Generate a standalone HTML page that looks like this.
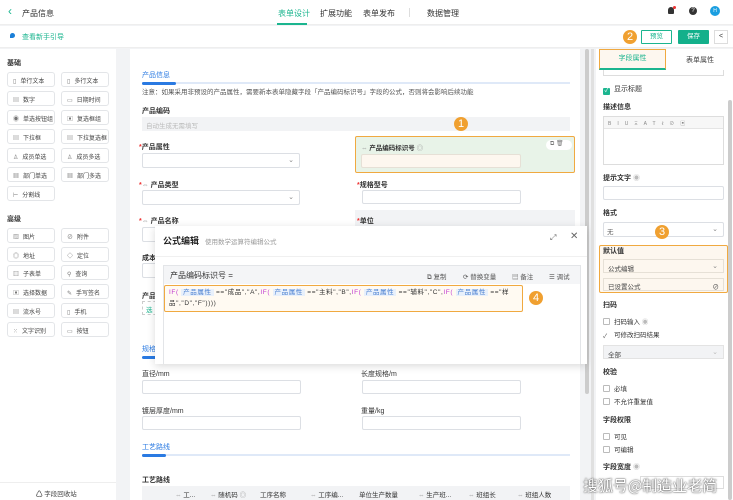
<!DOCTYPE html>
<html><head><meta charset="utf-8"><style>
*{margin:0;padding:0;box-sizing:border-box}
body{width:733px;height:500px;overflow:hidden;background:#f2f3f5;font-family:"Liberation Sans","Noto Sans CJK SC",sans-serif;font-size:7px;color:#333;position:relative}
.a{position:absolute;white-space:nowrap}
.b{font-weight:bold}
.btn{position:absolute;width:48px;height:15px;border:1px solid #e3e5e8;border-radius:3px;background:#fff;font-size:6px;color:#444;padding:3px 0 0 5px;white-space:nowrap}
.btn i{font-style:normal;color:#777;margin-right:4px}
.inp{position:absolute;border:1px solid #dcdfe4;border-radius:2px;background:#fff}
.lab{position:absolute;font-size:7px;font-weight:bold;color:#333;white-space:nowrap}
.req:before{content:"*";color:#e33}
.chev{position:absolute;right:5px;top:2px;color:#888;font-size:7px}
.circ{position:absolute;width:14px;height:14px;border-radius:50%;background:#f0a030;color:#fff;font-size:11px;text-align:center;line-height:14px}
.tag{background:#e8f0fb;color:#4a7fd0;padding:0 2px}
.kw{color:#c03ad0}
.cb{display:inline-block;width:7px;height:7px;border:1px solid #bbb;border-radius:1px;vertical-align:-1px;margin-right:4px;background:#fff}
</style></head><body>
<div class="a" style="left:0;top:0;width:733px;height:25px;background:#fff;border-bottom:1px solid #eee"></div>
<div class="a" style="left:8px;top:4px;font-size:12px;color:#1bb58f">&#8249;</div>
<div class="a" style="left:22px;top:8px;font-size:8px;color:#333">产品信息</div>
<div class="a" style="left:278px;top:8px;font-size:8px;color:#1bb58f">表单设计</div>
<div class="a" style="left:277px;top:23px;width:30px;height:2px;background:#1bb58f"></div>
<div class="a" style="left:320px;top:8px;font-size:8px">扩展功能</div>
<div class="a" style="left:363px;top:8px;font-size:8px">表单发布</div>
<div class="a" style="left:409px;top:8px;width:1px;height:9px;background:#ddd"></div>
<div class="a" style="left:427px;top:8px;font-size:8px">数据管理</div>
<div class="a" style="left:668px;top:7px;width:6px;height:7px;background:#333;border-radius:3px 3px 1px 1px"></div>
<div class="a" style="left:673px;top:6px;width:3px;height:3px;background:#e33;border-radius:50%"></div>
<div class="a" style="left:689px;top:7px;width:8px;height:8px;background:#333;border-radius:50%;color:#fff;font-size:6px;text-align:center;line-height:8px">?</div>
<div class="a" style="left:710px;top:6px;width:10px;height:10px;background:#1a9ee0;border-radius:50%;color:#fff;font-size:5px;text-align:center;line-height:10px">H</div>
<div class="a" style="left:0;top:26px;width:733px;height:22px;background:#fff;border-bottom:1px solid #eee"></div>
<div class="a" style="left:10px;top:33px;width:5px;height:5px;background:#1a7fd8;border-radius:50% 50% 50% 0"></div>
<div class="a" style="left:22px;top:32px;font-size:7px;color:#1bb58f">查看新手引导</div>
<div class="a" style="left:641px;top:30px;width:31px;height:14px;border:1px solid #1bb58f;color:#1bb58f;font-size:6.5px;text-align:center;line-height:12px;border-radius:1px">预览</div>
<div class="a" style="left:678px;top:30px;width:31px;height:14px;background:#13b08b;color:#fff;font-size:6.5px;text-align:center;line-height:14px;border-radius:1px">保存</div>
<div class="a" style="left:714px;top:30px;width:14px;height:14px;border:1px solid #ddd;background:#fff;font-size:7px;text-align:center;line-height:12px">&lt;</div>
<div class="circ" style="left:623px;top:30px">2</div>
<div class="a" style="left:0;top:49px;width:116px;height:451px;background:#fff"></div>
<div class="a b" style="left:7px;top:58px;font-size:7px">基础</div>
<div class="btn" style="left:7px;top:72px"><i>▯</i>单行文本</div><div class="btn" style="left:61px;top:72px"><i>▯</i>多行文本</div>
<div class="btn" style="left:7px;top:91px"><i>▤</i>数字</div><div class="btn" style="left:61px;top:91px"><i>▭</i>日期时间</div>
<div class="btn" style="left:7px;top:110px"><i>◉</i>单选按钮组</div><div class="btn" style="left:61px;top:110px"><i>▣</i>复选框组</div>
<div class="btn" style="left:7px;top:129px"><i>▤</i>下拉框</div><div class="btn" style="left:61px;top:129px"><i>▤</i>下拉复选框</div>
<div class="btn" style="left:7px;top:148px"><i>♙</i>成员单选</div><div class="btn" style="left:61px;top:148px"><i>♙</i>成员多选</div>
<div class="btn" style="left:7px;top:167px"><i>▦</i>部门单选</div><div class="btn" style="left:61px;top:167px"><i>▦</i>部门多选</div>
<div class="btn" style="left:7px;top:186px"><i>⊢</i>分割线</div>
<div class="a b" style="left:7px;top:214px;font-size:7px">高级</div>
<div class="btn" style="left:7px;top:228px"><i>▨</i>图片</div><div class="btn" style="left:61px;top:228px"><i>⊘</i>附件</div>
<div class="btn" style="left:7px;top:247px"><i>◎</i>地址</div><div class="btn" style="left:61px;top:247px"><i>◇</i>定位</div>
<div class="btn" style="left:7px;top:265px"><i>▥</i>子表单</div><div class="btn" style="left:61px;top:265px"><i>⚲</i>查询</div>
<div class="btn" style="left:7px;top:284px"><i>▣</i>选择数据</div><div class="btn" style="left:61px;top:284px"><i>✎</i>手写签名</div>
<div class="btn" style="left:7px;top:303px"><i>▤</i>流水号</div><div class="btn" style="left:61px;top:303px"><i>▯</i>手机</div>
<div class="btn" style="left:7px;top:322px"><i>⁙</i>文字识别</div><div class="btn" style="left:61px;top:322px"><i>▭</i>按钮</div>
<div class="a" style="left:0;top:482px;width:116px;height:1px;background:#eee"></div>
<div class="a" style="left:36px;top:488px;font-size:6.5px;color:#444">♺ 字段回收站</div>
<div class="a" style="left:130px;top:49px;width:450px;height:451px;background:#fff"></div>
<div class="a" style="left:585px;top:49px;width:4px;height:345px;background:#ccc;border-radius:2px"></div>
<div class="a" style="left:142px;top:70px;font-size:7px;color:#2a7ae2">产品信息</div>
<div class="a" style="left:142px;top:82px;width:428px;height:2px;background:#dfe9f8"></div>
<div class="a" style="left:142px;top:82px;width:34px;height:3px;background:#2a7ae2;border-radius:2px"></div>
<div class="a" style="left:142px;top:86px;font-size:6.5px;color:#555">注意：如果采用非预设的产品属性，需要新本表单隐藏字段「产品编码标识号」字段的公式，否则将会影响后续功能</div>
<div class="lab" style="left:142px;top:106px">产品编码</div>
<div class="a" style="left:142px;top:117px;width:428px;height:14px;background:#f2f3f5"></div>
<div class="a" style="left:146px;top:120px;font-size:6.5px;color:#bbb">自动生成无需填写</div>
<div class="circ" style="left:454px;top:117px">1</div>
<div class="lab req" style="left:139px;top:142px">产品属性</div>
<div class="inp" style="left:142px;top:153px;width:158px;height:15px"><span class="chev">⌄</span></div>
<div class="a" style="left:355px;top:136px;width:220px;height:37px;background:#e8f3e8;border:1.5px solid #f0a940;border-radius:2px"></div>
<div class="a" style="left:361px;top:142px;font-size:6.5px;font-weight:bold"><span style="color:#999;font-weight:normal">⇔</span> 产品编码标识号 <span style="color:#999;font-weight:normal">◎</span></div>
<div class="a" style="left:546px;top:140px;width:26px;height:10px;background:#fff;border-radius:5px;font-size:6px;color:#777;padding-left:4px">⧉ 🗑</div>
<div class="a" style="left:361px;top:154px;width:160px;height:14px;background:#fdf7ef;border:1px solid #e6e0d6;border-radius:2px"></div>
<div class="lab req" style="left:139px;top:180px"><span style="color:#999;font-weight:normal">⇔</span> 产品类型</div>
<div class="inp" style="left:142px;top:190px;width:158px;height:15px"><span class="chev">⌄</span></div>
<div class="lab req" style="left:357px;top:180px">规格型号</div>
<div class="inp" style="left:362px;top:190px;width:159px;height:14px"></div>
<div class="lab req" style="left:139px;top:216px"><span style="color:#999;font-weight:normal">⇔</span> 产品名称</div>
<div class="a" style="left:355px;top:210px;width:220px;height:18px;background:#f2f3f5"></div>
<div class="lab req" style="left:357px;top:216px">单位</div>
<div class="inp" style="left:142px;top:227px;width:20px;height:15px"></div>
<div class="lab" style="left:142px;top:253px">成本</div>
<div class="inp" style="left:142px;top:263px;width:20px;height:15px"></div>
<div class="lab" style="left:142px;top:291px">产品</div>
<div class="a" style="left:142px;top:301px;width:20px;height:14px;border:1px dashed #ccc;font-size:6.5px;color:#1bb58f;padding:2px 3px">选</div>
<div class="a" style="left:142px;top:344px;font-size:7px;color:#2a7ae2">规格</div>
<div class="a" style="left:142px;top:356px;width:20px;height:3px;background:#2a7ae2;border-radius:2px"></div>
<div class="lab" style="left:142px;top:369px;font-weight:normal;color:#333">直径/mm</div>
<div class="inp" style="left:142px;top:380px;width:159px;height:14px"></div>
<div class="lab" style="left:361px;top:369px;font-weight:normal">长度规格/m</div>
<div class="inp" style="left:362px;top:380px;width:159px;height:14px"></div>
<div class="lab" style="left:142px;top:406px;font-weight:normal">镀层厚度/mm</div>
<div class="inp" style="left:142px;top:416px;width:159px;height:14px"></div>
<div class="lab" style="left:361px;top:406px;font-weight:normal">重量/kg</div>
<div class="inp" style="left:362px;top:416px;width:159px;height:14px"></div>
<div class="a" style="left:142px;top:442px;font-size:7px;color:#2a7ae2">工艺路线</div>
<div class="a" style="left:142px;top:454px;width:428px;height:2px;background:#dfe9f8"></div>
<div class="a" style="left:142px;top:454px;width:24px;height:3px;background:#2a7ae2;border-radius:2px"></div>
<div class="lab" style="left:142px;top:475px">工艺路线</div>
<div class="a" style="left:142px;top:486px;width:428px;height:14px;background:#f2f3f5"></div>
<div class="a" style="left:175px;top:489px;font-size:6.5px;color:#333"><span style="color:#999">⇔</span> 工...</div>
<div class="a" style="left:210px;top:489px;font-size:6.5px"><span style="color:#999">⇔</span> 随机码 <span style="color:#999">◎</span></div>
<div class="a" style="left:260px;top:489px;font-size:6.5px">工序名称</div>
<div class="a" style="left:310px;top:489px;font-size:6.5px"><span style="color:#999">⇔</span> 工序编...</div>
<div class="a" style="left:359px;top:489px;font-size:6.5px">单位生产数量</div>
<div class="a" style="left:418px;top:489px;font-size:6.5px"><span style="color:#999">⇔</span> 生产班...</div>
<div class="a" style="left:468px;top:489px;font-size:6.5px"><span style="color:#999">⇔</span> 班组长</div>
<div class="a" style="left:517px;top:489px;font-size:6.5px"><span style="color:#999">⇔</span> 班组人数</div>
<div class="a" style="left:155px;top:226px;width:432px;height:138px;background:#fff;box-shadow:0 2px 8px rgba(0,0,0,.15)"></div>
<div class="a" style="left:155px;top:256px;width:432px;height:1px;background:#f0f0f0"></div>
<div class="a b" style="left:163px;top:234px;font-size:9px;color:#222">公式编辑</div>
<div class="a" style="left:205px;top:236px;font-size:6.5px;color:#999">使用数学运算符编辑公式</div>
<div class="a" style="left:550px;top:233px;font-size:8px;color:#666">⤢</div>
<div class="a" style="left:570px;top:231px;font-size:10px;color:#666">✕</div>
<div class="a" style="left:163px;top:265px;width:418px;height:99px;border:1px solid #e3e5e8;border-bottom:none"></div>
<div class="a" style="left:164px;top:266px;width:416px;height:18px;background:#f4f5f7"></div>
<div class="a" style="left:170px;top:270px;font-size:8px;color:#333">产品编码标识号 =</div>
<div class="a" style="left:427px;top:271px;font-size:6.5px;color:#555">⧉ 复制</div>
<div class="a" style="left:463px;top:271px;font-size:6.5px;color:#555">⟳ 替换变量</div>
<div class="a" style="left:512px;top:271px;font-size:6.5px;color:#555">▤ 备注</div>
<div class="a" style="left:549px;top:271px;font-size:6.5px;color:#555">☰ 调试</div>
<div class="a" style="left:164px;top:285px;width:359px;height:27px;background:#fffaf2;border:1.5px solid #f0a940;border-radius:2px"></div>
<div class="a" style="left:169px;top:288px;font-size:6.5px;line-height:10.5px;color:#333;font-family:'Liberation Sans','Noto Sans CJK SC',sans-serif;letter-spacing:0.6px"><span class="kw">IF(</span> <span class="tag">产品属性</span> =="成品","A",<span class="kw">IF(</span> <span class="tag">产品属性</span> =="主料","B",<span class="kw">IF(</span> <span class="tag">产品属性</span> =="辅料","C",<span class="kw">IF(</span> <span class="tag">产品属性</span> =="样<br>品","D","F"))))</div>
<div class="circ" style="left:529px;top:291px">4</div>
<div class="a" style="left:596px;top:49px;width:137px;height:451px;background:#fff"></div>
<div class="a" style="left:591px;top:49px;width:3px;height:451px;background:#e0e0e0"></div>
<div class="a" style="left:728px;top:100px;width:4px;height:400px;background:#ccc;border-radius:2px"></div>
<div class="a" style="left:599px;top:49px;width:67px;height:21px;background:#fdf7ef;border:1.5px solid #f0a940;border-bottom:2px solid #1bb58f;font-size:7px;color:#1bb58f;text-align:center;line-height:18px">字段属性</div>
<div class="a" style="left:686px;top:55px;font-size:7px;color:#444">表单属性</div>
<div class="a" style="left:603px;top:70px;width:121px;height:6px;border:1px solid #ddd;border-top:none"></div>
<div class="a" style="left:603px;top:84px;font-size:7px"><span class="cb" style="background:#1bb58f;border-color:#1bb58f;color:#fff;font-size:6px;line-height:5px;text-align:center">✓</span>显示标题</div>
<div class="lab" style="left:603px;top:102px">描述信息</div>
<div class="a" style="left:603px;top:116px;width:121px;height:49px;border:1px solid #ddd"></div>
<div class="a" style="left:604px;top:117px;width:119px;height:12px;background:#f7f7f7;border-bottom:1px solid #e5e5e5;font-size:5px;color:#888;padding:3px 4px;letter-spacing:6px">BIUΞATℓ⊘▣</div>
<div class="lab" style="left:603px;top:173px">提示文字 <span style="color:#bbb;font-weight:normal">◉</span></div>
<div class="inp" style="left:603px;top:186px;width:121px;height:14px"></div>
<div class="lab" style="left:603px;top:208px">格式</div>
<div class="inp" style="left:603px;top:222px;width:121px;height:15px"><span class="a" style="left:3px;top:3px;font-size:6.5px;color:#666">无</span><span class="chev">⌄</span></div>
<div class="circ" style="left:655px;top:225px">3</div>
<div class="a" style="left:599px;top:245px;width:129px;height:48px;background:#fdf7ef;border:1.5px solid #f0a940;border-radius:2px"></div>
<div class="lab" style="left:603px;top:246px">默认值</div>
<div class="a" style="left:603px;top:259px;width:121px;height:14px;border:1px solid #e6e0d6;font-size:6.5px;color:#444;padding:3px 0 0 4px">公式编辑<span class="chev">⌄</span></div>
<div class="a" style="left:603px;top:278px;width:121px;height:13px;border:1px solid #e6e0d6;font-size:6.5px;color:#444;padding:2px 0 0 4px">已设置公式<span class="a" style="right:4px;top:2px">⊘</span></div>
<div class="lab" style="left:603px;top:300px">扫码</div>
<div class="a" style="left:603px;top:316px;font-size:6.5px"><span class="cb"></span>扫码输入 <span style="color:#bbb">◉</span></div>
<div class="a" style="left:603px;top:329px;font-size:6.5px"><span class="cb" style="border:none;font-size:6px;line-height:7px;color:#555">✓</span>可修改扫码结果</div>
<div class="a" style="left:603px;top:345px;width:121px;height:14px;background:#f2f3f5;border:1px solid #e3e3e3;font-size:6.5px;color:#444;padding:3px 0 0 4px">全部<span class="chev" style="color:#bbb">⌄</span></div>
<div class="lab" style="left:603px;top:367px">校验</div>
<div class="a" style="left:603px;top:383px;font-size:6.5px"><span class="cb"></span>必填</div>
<div class="a" style="left:603px;top:396px;font-size:6.5px"><span class="cb"></span>不允许重复值</div>
<div class="lab" style="left:603px;top:415px">字段权限</div>
<div class="a" style="left:603px;top:431px;font-size:6.5px"><span class="cb"></span>可见</div>
<div class="a" style="left:603px;top:444px;font-size:6.5px"><span class="cb"></span>可编辑</div>
<div class="lab" style="left:603px;top:462px">字段宽度 <span style="color:#bbb;font-weight:normal">◉</span></div>
<div class="a" style="left:640px;top:476px;width:84px;height:13px;border:1px solid #ddd"></div>
<div class="a" style="left:583px;top:475px;font-size:15px;color:#fff;text-shadow:0 0 2px #666,0 0 1px #333;font-family:'Noto Sans CJK SC',sans-serif">搜狐号@制造业老简</div>
</body></html>
